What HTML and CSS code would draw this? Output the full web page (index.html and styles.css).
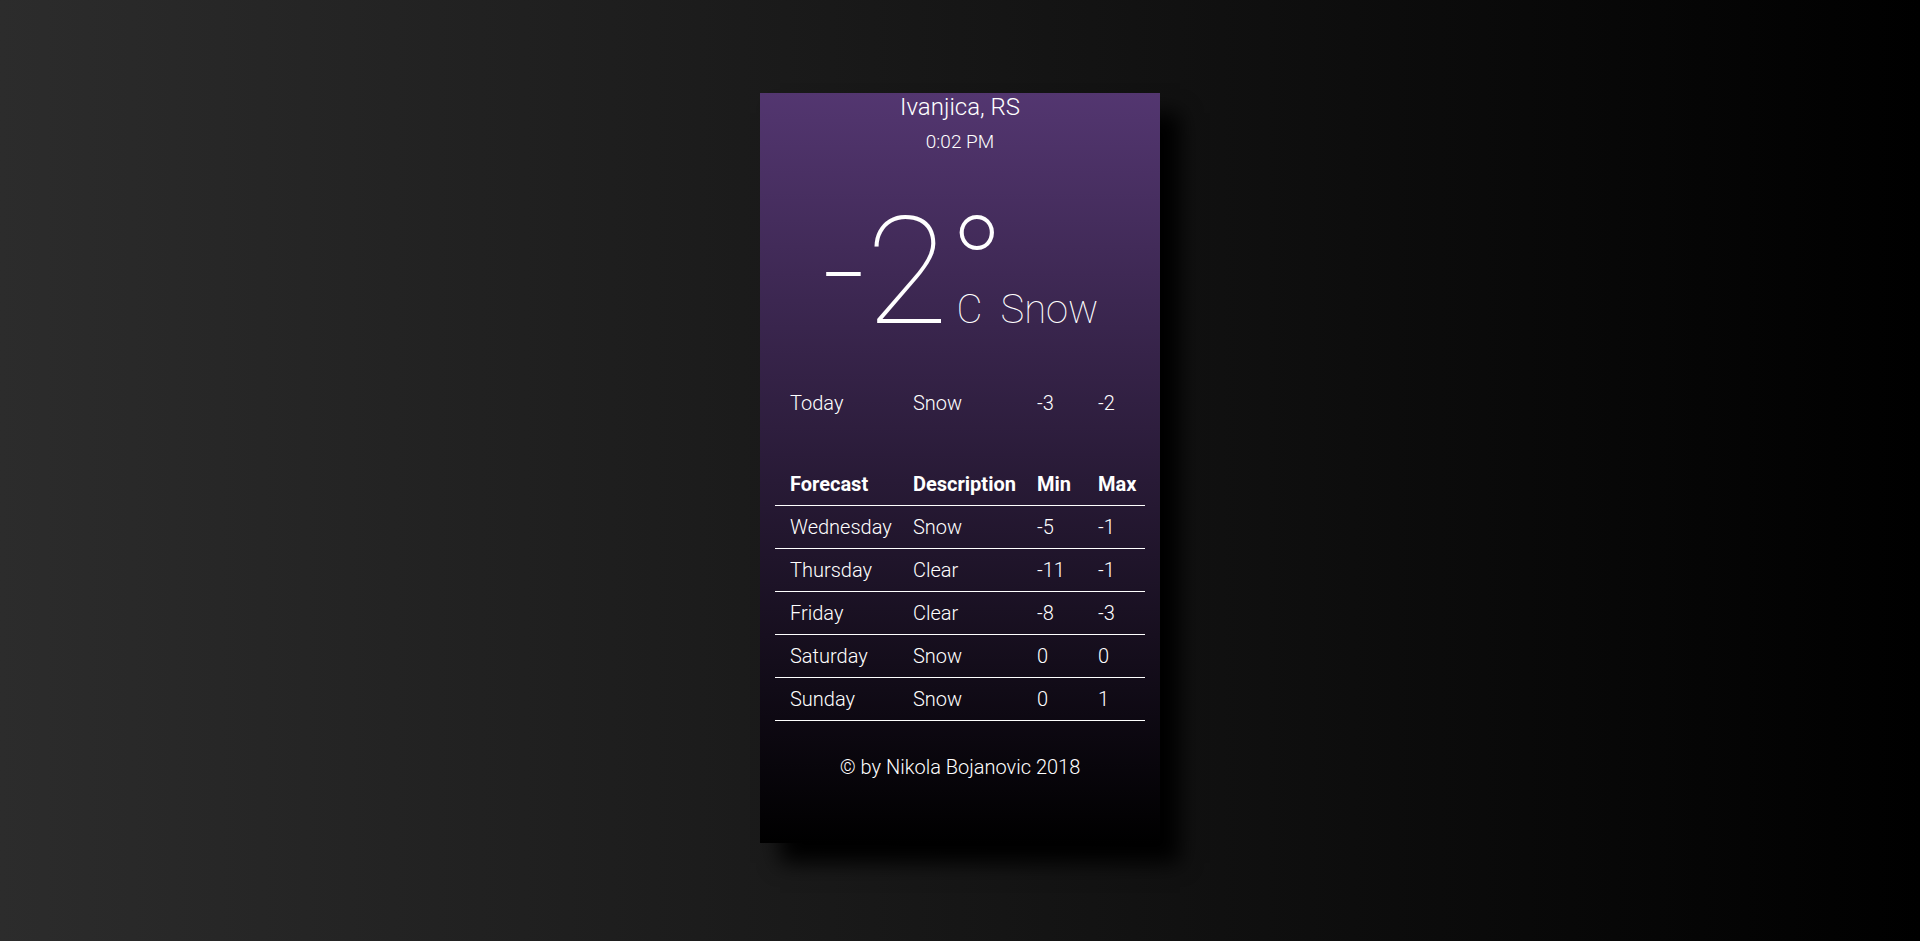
FILE: index.html
```html
<!DOCTYPE html>
<html lang="en">
<head>
<meta charset="utf-8">
<title>Weather</title>
<link rel="stylesheet" href="styles.css">
</head>
<body>
<main class="card">
  <h1 class="city">Ivanjica, RS</h1>
  <p class="time">0:02 PM</p>
  <div class="now">
    <span class="temp">-2°</span><span class="unit">C</span><span class="desc">Snow</span>
  </div>
  <table class="today">
    <colgroup><col class="c1"><col class="c2"><col class="c3"><col class="c4"></colgroup>
    <tbody>
      <tr><td>Today</td><td>Snow</td><td>-3</td><td>-2</td></tr>
    </tbody>
  </table>
  <table class="forecast">
    <colgroup><col class="c1"><col class="c2"><col class="c3"><col class="c4"></colgroup>
    <thead>
      <tr><th>Forecast</th><th>Description</th><th>Min</th><th>Max</th></tr>
    </thead>
    <tbody>
      <tr><td>Wednesday</td><td>Snow</td><td>-5</td><td>-1</td></tr>
      <tr><td>Thursday</td><td>Clear</td><td>-11</td><td>-1</td></tr>
      <tr><td>Friday</td><td>Clear</td><td>-8</td><td>-3</td></tr>
      <tr><td>Saturday</td><td>Snow</td><td>0</td><td>0</td></tr>
      <tr><td>Sunday</td><td>Snow</td><td>0</td><td>1</td></tr>
    </tbody>
  </table>
  <footer class="credit">© by Nikola Bojanovic 2018</footer>
</main>
</body>
</html>
```
FILE: styles.css
```css
html, body {
  margin: 0;
  padding: 0;
}
body {
  min-height: 941px;
  background: linear-gradient(to right, #2c2c2c, #000000);
  font-family: Roboto, "Liberation Sans", sans-serif;
  font-weight: 300;
  color: #fff;
  overflow: hidden;
}
.card {
  box-sizing: border-box;
  width: 400px;
  height: 750px;
  margin: 93px auto 0;
  padding: 0 15px;
  background: linear-gradient(to bottom, #533670, #000000);
  box-shadow: 20px 20px 20px #000;
}
.city {
  margin: 0;
  font-size: 24px;
  font-weight: 300;
  text-align: center;
  line-height: 28px;
}
.time {
  margin: 10px 0 0;
  font-size: 19px;
  line-height: 22px;
  text-align: center;
}
.now {
  margin-top: 31px;
  text-align: center;
  white-space: nowrap;
  line-height: 176px;
  height: 176px;
}
.temp {
  font-size: 150px;
  font-weight: 100;
}
.unit {
  font-size: 40px;
  font-weight: 100;
  margin-left: -49px;
}
.desc {
  font-size: 40px;
  font-weight: 100;
  margin-left: 18px;
}
table {
  width: 100%;
  border-collapse: collapse;
  table-layout: fixed;
  font-size: 20px;
}
.c1 { width: 123px; }
.c2 { width: 124px; }
.c3 { width: 61px; }
.c4 { width: 62px; }
td, th {
  padding: 9px 0 9px 15px;
  line-height: 24px;
  text-align: left;
  white-space: nowrap;
}
th {
  font-weight: 700;
}
.today {
  margin-top: 22px;
}
.forecast {
  margin-top: 39px;
}
.forecast tr {
  border-bottom: 1px solid #fff;
}
.credit {
  margin-top: 34px;
  font-size: 20px;
  line-height: 24px;
  text-align: center;
}
```
